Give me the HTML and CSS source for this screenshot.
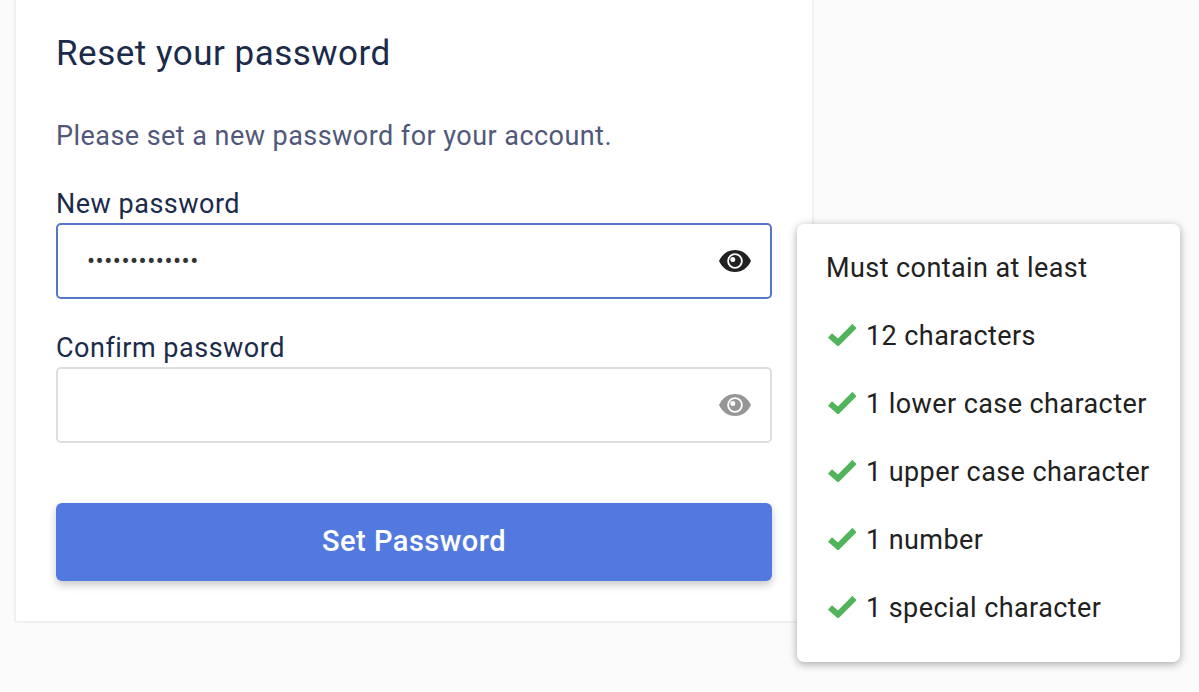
FILE: index.html
```html
<!DOCTYPE html>
<html lang="en">
<head>
  <meta charset="UTF-8">
  <title>Reset your password</title>
  <link rel="stylesheet" href="styles.css">
</head>
<body>

  <div class="page">
    <div class="card">
      <h1>Reset your password</h1>
      <p class="intro">Please set a new password for your account.</p>

      <label class="field-label" for="newPassword">New password</label>
      <div class="input-box focused">
        <input type="password" id="newPassword" value="abcdefghijkl1" class="pw-input">
        <svg class="eye" viewBox="0 0 32 22">
          <path fill-rule="evenodd" d="M16 0C8.500 0 3 4.500 0 11C3 17.500 8.500 22 16 22C23.500 22 29 17.500 32 11C29 4.500 23.500 0 16 0ZM16 3.200A7.800 7.800 0 1 1 16 18.800A7.800 7.800 0 1 1 16 3.200Z"/>
          <path fill-rule="evenodd" d="M16 5A6 6 0 1 1 16 17A6 6 0 1 1 16 5ZM13.800 7A2.500 2.500 0 1 0 13.800 12A2.500 2.500 0 1 0 13.800 7Z"/>
        </svg>
      </div>

      <label class="field-label second" for="confirmPassword">Confirm password</label>
      <div class="input-box">
        <input type="password" id="confirmPassword" class="pw-input">
        <svg class="eye muted" viewBox="0 0 32 22">
          <path fill-rule="evenodd" d="M16 0C8.500 0 3 4.500 0 11C3 17.500 8.500 22 16 22C23.500 22 29 17.500 32 11C29 4.500 23.500 0 16 0ZM16 3.200A7.800 7.800 0 1 1 16 18.800A7.800 7.800 0 1 1 16 3.200Z"/>
          <path fill-rule="evenodd" d="M16 5A6 6 0 1 1 16 17A6 6 0 1 1 16 5ZM13.800 7A2.500 2.500 0 1 0 13.800 12A2.500 2.500 0 1 0 13.800 7Z"/>
        </svg>
      </div>

      <button class="submit">Set Password</button>
    </div>
  </div>

  <!-- Password rules popover -->
  <div class="rules">
    <div class="rules-title">Must contain at least</div>
    <div class="rule"><svg class="check" viewBox="0 0 28 22"><path d="M2 11.500L10 18.500L26.500 2" /></svg>12 characters</div>
    <div class="rule"><svg class="check" viewBox="0 0 28 22"><path d="M2 11.500L10 18.500L26.500 2" /></svg>1 lower case character</div>
    <div class="rule"><svg class="check" viewBox="0 0 28 22"><path d="M2 11.500L10 18.500L26.500 2" /></svg>1 upper case character</div>
    <div class="rule"><svg class="check" viewBox="0 0 28 22"><path d="M2 11.500L10 18.500L26.500 2" /></svg>1 number</div>
    <div class="rule"><svg class="check" viewBox="0 0 28 22"><path d="M2 11.500L10 18.500L26.500 2" /></svg>1 special character</div>
  </div>

</body>
</html>
```

FILE: styles.css
```css
html, body {
  height: 100%;
}

body {
  font-family: Roboto, sans-serif;
  background-color: #fbfbfb;
  margin: 0;
  overflow: hidden;
  position: relative;
}

.page {
  padding-left: 14px;
}

.card {
  width: 800px;
  height: 623px;
  box-sizing: border-box;
  padding: 34px 40px 0 40px;
  background: white;
  border: 2px solid #f0f0f0;
  border-top: none;
  border-radius: 0 0 4px 4px;
}

h1 {
  margin: 0;
  font-size: 35px;
  line-height: 40px;
  font-weight: 400;
  letter-spacing: 0.5px;
  color: #1c2b4a;
}

.intro {
  margin: 42px 0 0 0;
  font-size: 27px;
  line-height: 40px;
  letter-spacing: 0.45px;
  color: #51587a;
}

.field-label {
  display: block;
  height: 39px;
  margin-top: 28px;
  font-size: 27px;
  line-height: 40px;
  letter-spacing: 0.5px;
  color: #1c2b4a;
}

.field-label.second {
  margin-top: 29px;
}

.input-box {
  display: flex;
  align-items: center;
  height: 76px;
  box-sizing: border-box;
  padding: 0 19px 0 29px;
  border: 2px solid #dedede;
  border-radius: 5px;
}

.input-box.focused {
  border-color: #5677c9;
}

.pw-input {
  flex: 1;
  min-width: 0;
  border: none;
  outline: none;
  background: none;
  font-family: Roboto, sans-serif;
  font-size: 24px;
  letter-spacing: 0.5px;
  color: #333;
  padding: 0;
}

.eye {
  width: 32px;
  height: 22px;
  fill: #222;
}

.eye.muted {
  fill: #969696;
}

.submit {
  display: block;
  width: 100%;
  height: 78px;
  margin-top: 60px;
  padding-bottom: 3px;
  border: none;
  border-radius: 6px;
  background-color: #5279e0;
  color: white;
  font-family: Roboto, sans-serif;
  font-size: 29px;
  font-weight: 500;
  letter-spacing: 0.5px;
  box-shadow: 0 4px 8px rgba(0,0,0,0.22);
}

.rules {
  position: absolute;
  left: 797px;
  top: 224px;
  width: 383px;
  height: 438px;
  box-sizing: border-box;
  padding: 24px 0 0 29px;
  background: white;
  border-radius: 7px;
  box-shadow: 0 2px 8px rgba(0,0,0,0.35);
  font-size: 27px;
  letter-spacing: 0.42px;
  color: #212121;
}

.rules-title {
  height: 40px;
  line-height: 40px;
}

.rule {
  display: flex;
  align-items: center;
  height: 40px;
  line-height: 40px;
  margin-top: 28px;
}

.check {
  width: 28px;
  height: 22px;
  margin-left: 2px;
  margin-right: 10px;
  margin-top: -2px;
  fill: none;
  stroke: #50b45a;
  stroke-width: 6;
}
```
